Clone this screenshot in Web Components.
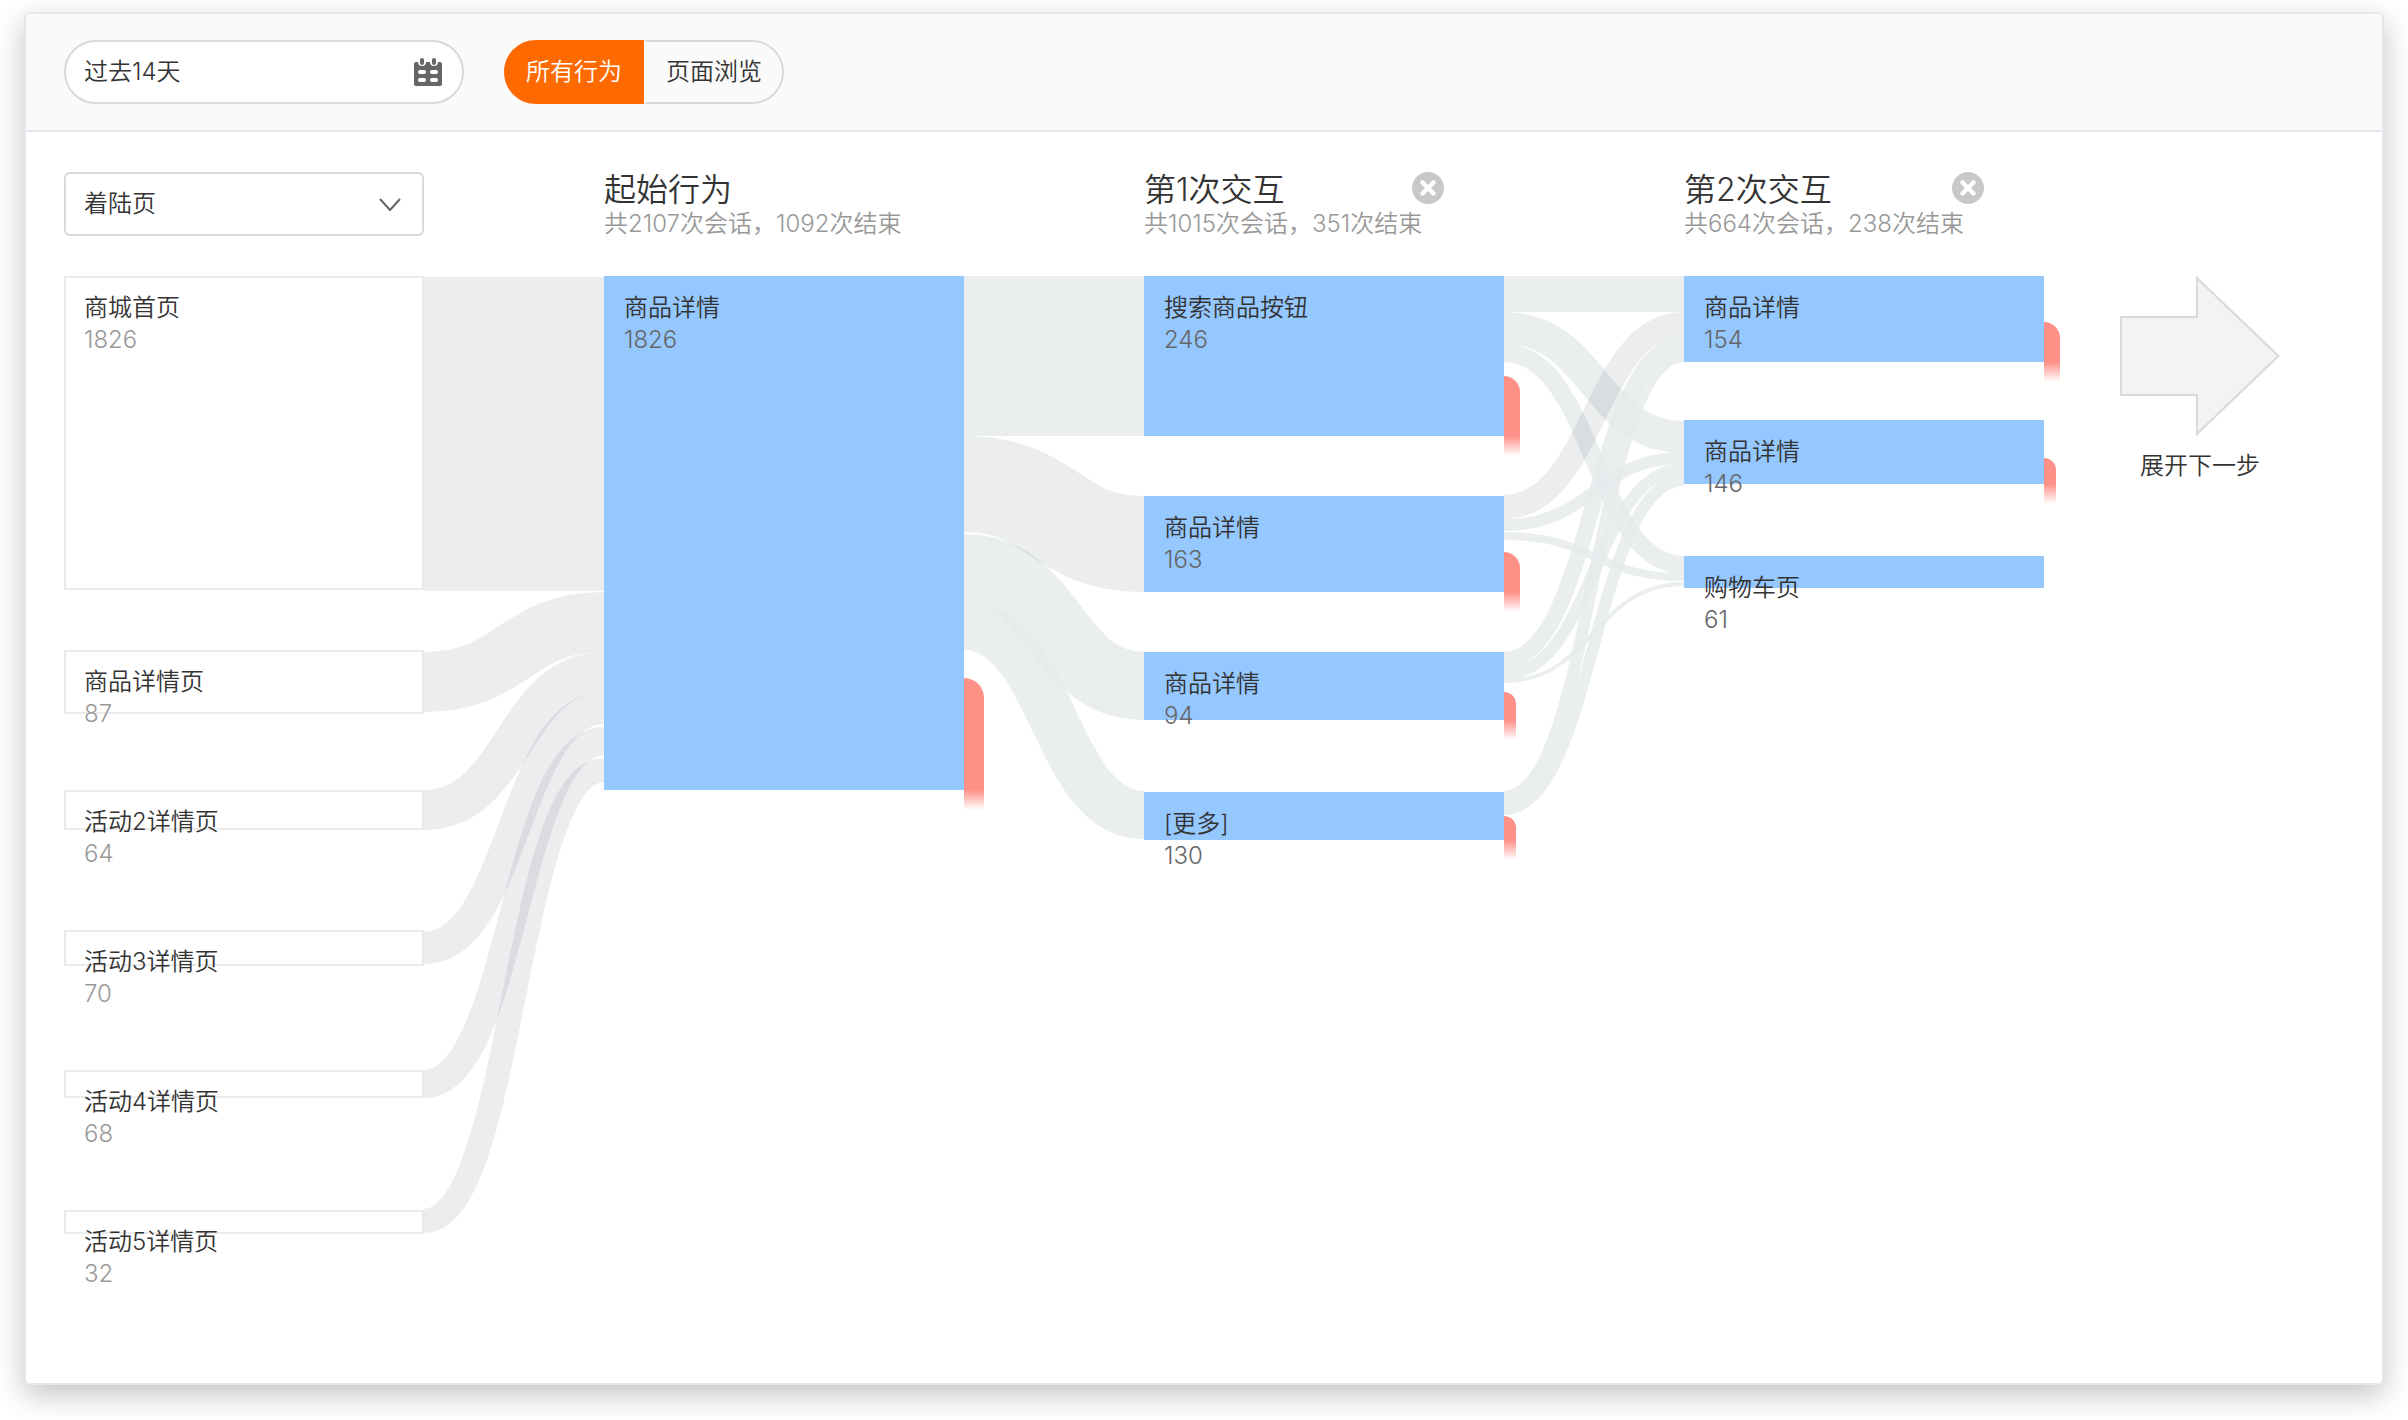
<!DOCTYPE html>
<html lang="zh-CN">
<head>
<meta charset="utf-8">
<title>行为路径分析</title>
<style>
html{background:#fff}
body{margin:0;font:350 24px/32px Inter,"Noto Sans CJK SC DemiLight","Noto Sans CJK SC",sans-serif;color:#333}
</style>
</head>
<body>
<path-page></path-page>
<script>
const define = (name, html, init) => {
  const tpl = document.createElement('template');
  tpl.innerHTML = html;
  customElements.define(name, class extends HTMLElement {
    connectedCallback() {
      if (this.shadowRoot) return;
      const root = this.attachShadow({mode: 'open'});
      root.append(tpl.content.cloneNode(true));
      if (init) init(this, root);
    }
  });
};

define('date-range', `
<style>
:host{display:block;width:400px}
label{display:flex;align-items:center;box-sizing:border-box;height:64px;padding:0 18px;border:2px solid #d9d9d9;border-radius:32px;background:#fff}
input{flex:1;min-width:0;padding:0;border:0;outline:0;background:none;font:inherit;color:inherit}
svg{display:block;width:32px;height:32px}
</style>
<label><input type="text" aria-label="日期范围" readonly>
<svg viewBox="0 0 32 32" aria-hidden="true">
<rect x="2" y="6" width="28" height="24" rx="2" fill="#666"/>
<g stroke="#fff" stroke-width="8" stroke-linecap="round"><path d="M10 4v2M22 4v2"/></g>
<g stroke="#666" stroke-width="4" stroke-linecap="round"><path d="M10 4v3M22 4v3"/></g>
<g fill="#fff"><rect x="6" y="14" width="8" height="4" rx="2"/><rect x="18" y="14" width="8" height="4" rx="2"/><rect x="6" y="22" width="8" height="4" rx="2"/><rect x="18" y="22" width="8" height="4" rx="2"/></g>
</svg></label>`, (el, root) => { root.querySelector('input').value = el.getAttribute('value'); });

define('behavior-toggle', `
<style>
:host{display:flex}
button{box-sizing:border-box;width:140px;height:64px;margin:0;padding:0;border:2px solid #d9d9d9;background:none;font:inherit;color:inherit}
.on{border-color:#ff6a00;border-radius:32px 0 0 32px;background:#ff6a00;color:#fff}
.off{border-left-color:transparent;border-radius:0 32px 32px 0}
</style>
<button class="on" type="button" aria-pressed="true">所有行为</button><button class="off" type="button" aria-pressed="false">页面浏览</button>`);

define('source-select', `
<style>
:host{display:grid;align-items:center}
select,svg{grid-area:1/1}
select{appearance:none;box-sizing:border-box;width:100%;height:64px;padding:0 18px;border:2px solid #d9d9d9;border-radius:6px;background:#fff;font:inherit;color:inherit}
svg{justify-self:end;margin-right:22px;pointer-events:none}
</style>
<select aria-label="来源"><option>着陆页</option></select>
<svg width="24" height="16" viewBox="0 0 24 16" fill="none" stroke="#666" stroke-width="2" aria-hidden="true"><path d="M2 3l10 11L22 3"/></svg>`);

define('step-head', `
<style>
:host{display:block;white-space:nowrap}
.row{display:flex;justify-content:space-between;align-items:flex-start;height:36px;padding-right:60px}
h2{margin:0;font:inherit;font-size:32px;line-height:36px}
p{margin:0;color:#999}
button{display:block;width:32px;height:32px;padding:0;border:0;background:none}
svg{display:block}
:host(:not([closable])) button{display:none}
</style>
<div class="row"><h2><slot></slot></h2>
<button type="button" aria-label="移除"><svg width="32" height="32" viewBox="0 0 32 32" aria-hidden="true"><circle cx="16" cy="16" r="16" fill="#c8c8c8"/><path d="M10.5 10.5l11 11M21.5 10.5l-11 11" stroke="#fff" stroke-width="4.5" stroke-linecap="round"/></svg></button></div>
<p><slot name="sub"></slot></p>`);

/* h: node height, gap: space below, exit: solid length of the drop-off bar, w: its width */
define('flow-node', `
<style>
:host{display:block;position:relative;box-sizing:border-box;padding:16px 20px 0;background:#95c8ff;white-space:nowrap}
:host([plain]){padding:14px 18px 0;border:2px solid #ebebeb;background:#fff}
.num{color:#666}
:host([plain]) .num{color:#999}
.exit{position:absolute;left:100%;bottom:-20px}
</style>
<div><slot></slot></div><div class="num"></div>`, (el, root) => {
  el.style.height = el.getAttribute('h') + 'px';
  el.style.marginBottom = (el.getAttribute('gap') || 0) + 'px';
  root.querySelector('.num').textContent = el.getAttribute('count');
  if (el.hasAttribute('exit')) {
    const len = +el.getAttribute('exit'), w = +el.getAttribute('w');
    const bar = document.createElement('div');
    bar.className = 'exit';
    bar.style.cssText = `width:${w}px;height:${len + 20}px;border-top-right-radius:${w}px;background:linear-gradient(#ff9088 ${len}px,#ff908800)`;
    root.append(bar);
  }
});

/* each link: left top, right top, thickness, tone (a = strong, b = soft) */
define('flow-links', `
<style>
:host{display:block;flex:none;width:180px;margin-top:104px}
svg{display:block;overflow:visible}
path{fill:none}
.a{stroke:rgba(17,30,55,.08)}
.b{stroke:rgba(229,234,235,.81)}
</style>
<svg width="180" height="958" viewBox="0 0 180 958" aria-hidden="true"></svg>`, (el, root) => {
  root.querySelector('svg').innerHTML = el.getAttribute('links').trim().split(/\s*;\s*/).map(s => {
    const [l, r, w, tone] = s.split(/\s+/);
    const y0 = +l + w / 2, y1 = +r + w / 2;
    return `<path class="${tone}" stroke-width="${w}" d="M0 ${y0}C90 ${y0} 90 ${y1} 180 ${y1}"/>`;
  }).join('');
});

define('flow-column', `
<style>
:host{display:block;flex:none;width:360px}
.head{height:104px}
</style>
<div class="head"><slot name="head"></slot></div><slot></slot>`);

define('next-step', `
<style>
:host{display:block;flex:none;margin:104px 0 0 76px}
button{display:flex;flex-direction:column;align-items:center;gap:14px;padding:0;border:0;background:none;font:inherit;color:inherit}
svg{display:block}
</style>
<button type="button"><svg width="160" height="160" viewBox="0 0 160 160" aria-hidden="true"><path d="M1 41H77V2L158.500 80L77 158V119H1Z" fill="#f3f3f3" stroke="#d9d9d9" stroke-width="2"/></svg><span>展开下一步</span></button>`);

define('path-page', `
<style>
:host{display:block;padding:12px 24px 35px}
main{border:2px solid #e4e8ec;border-radius:6px;background:#fff;box-shadow:0 10px 30px rgba(0,0,0,.24)}
header{display:flex;gap:40px;padding:26px 38px;border-bottom:2px solid #e4e8ec;border-radius:4px 4px 0 0;background:#fafafa}
.flow{display:flex;align-items:flex-start;padding:40px 38px 149px}
</style>
<main>
<header><date-range value="过去14天"></date-range><behavior-toggle></behavior-toggle></header>
<div class="flow">
<flow-column>
<source-select slot="head"></source-select>
<flow-node plain h="314" gap="60" count="1826">商城首页</flow-node>
<flow-node plain h="64" gap="76" count="87">商品详情页</flow-node>
<flow-node plain h="40" gap="100" count="64">活动2详情页</flow-node>
<flow-node plain h="36" gap="104" count="70">活动3详情页</flow-node>
<flow-node plain h="28" gap="112" count="68">活动4详情页</flow-node>
<flow-node plain h="24" count="32">活动5详情页</flow-node>
</flow-column>
<flow-links links="1 1 314 a; 376 316 60 a; 514 376 40 a; 656 416 32 a; 794 451 28 a; 933 482 24 a"></flow-links>
<flow-column>
<step-head slot="head">起始行为<span slot="sub">共2107次会话，1092次结束</span></step-head>
<flow-node h="514" count="1826" exit="112" w="20">商品详情</flow-node>
</flow-column>
<flow-links links="0 0 160 b; 258 376 68 b; 326 515 48 b; 160 220 96 a"></flow-links>
<flow-column>
<step-head slot="head" closable>第1次交互<span slot="sub">共1015次会话，351次结束</span></step-head>
<flow-node h="160" gap="60" count="246" exit="60" w="16">搜索商品按钮</flow-node>
<flow-node h="96" gap="60" count="163" exit="40" w="16">商品详情</flow-node>
<flow-node h="68" gap="72" count="94" exit="28" w="12">商品详情</flow-node>
<flow-node h="48" count="130" exit="24" w="12">[更多]</flow-node>
</flow-column>
<flow-links links="0 0 36 b; 36 145 32 b; 68 280 18 b; 243 176 12 b; 256 297 8 b; 376 60 16 b; 392 187 12 b; 403 306 4 b; 515 74 12 b; 527 198 12 b; 219 36 24 a"></flow-links>
<flow-column>
<step-head slot="head" closable>第2次交互<span slot="sub">共664次会话，238次结束</span></step-head>
<flow-node h="86" gap="58" count="154" exit="40" w="16">商品详情</flow-node>
<flow-node h="64" gap="72" count="146" exit="26" w="12">商品详情</flow-node>
<flow-node h="32" count="61">购物车页</flow-node>
</flow-column>
<next-step></next-step>
</div>
</main>`);
</script>
</body>
</html>
